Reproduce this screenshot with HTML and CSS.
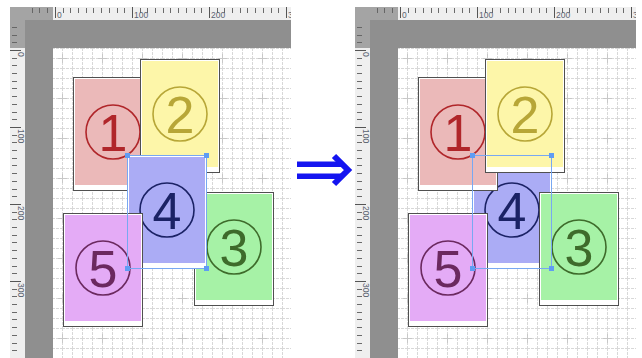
FILE: index.html
```html
<!DOCTYPE html>
<html>
<head>
<meta charset="utf-8">
<link rel="stylesheet" href="styles.css">
</head>
<body>
<div class="stage">
  <div class="panel">
    <div class="corner"></div>
    <div class="hneg"></div>
    <div class="hr"><span>0</span><span>100</span><span>200</span><span>300</span></div>
    <div class="vneg"></div>
    <div class="dark dtop"></div>
    <div class="dark dtop2"></div>
    <div class="vr"><span><b>0</b></span><span><b>100</b></span><span><b>200</b></span><span><b>300</b></span></div>
    <div class="dark dleft"></div>
    <div class="paper">
      <svg class="gridbg" width="238" height="310"><defs><pattern id="g1" x="4" y="5" width="10" height="10" patternUnits="userSpaceOnUse"><path d="M0 5.5h2M3 5.5h5M9 5.5h1M5.5 0v2M5.5 3v5M5.5 9v1" stroke="#d8d8d8" stroke-width="1"/></pattern><pattern id="m1" x="4" y="5" width="40" height="40" patternUnits="userSpaceOnUse"><path d="M1 5.5h9M5.5 1v9" stroke="#c8c8c8" stroke-width="1"/></pattern></defs><rect width="238" height="310" fill="url(#g1)"/><rect width="238" height="310" fill="url(#m1)"/></svg>
      <div class="card p1 k1"><div class="fill"><svg viewBox="0 0 56 56" class="num"><circle cx="28" cy="28" r="27"/><text x="28" y="47">1</text></svg></div></div>
      <div class="card p2 k2"><div class="fill"><svg viewBox="0 0 56 56" class="num"><circle cx="28" cy="28" r="27"/><text x="28" y="47">2</text></svg></div></div>
      <div class="card p3 k3"><div class="fill"><svg viewBox="0 0 56 56" class="num"><circle cx="28" cy="28" r="27"/><text x="28" y="47">3</text></svg></div></div>
      <div class="card p4 k4 sel"><div class="fill"><svg viewBox="0 0 56 56" class="num"><circle cx="28" cy="28" r="27"/><text x="28" y="47">4</text></svg></div></div>
      <div class="card p5 k5"><div class="fill"><svg viewBox="0 0 56 56" class="num"><circle cx="28" cy="28" r="27"/><text x="28" y="47">5</text></svg></div></div>
      <div class="selbox"><i class="h tl"></i><i class="h tr"></i><i class="h bl"></i><i class="h br"></i></div>
    </div>
  </div>

  <div class="arrowcol">
    <svg class="arrow" width="56" height="35" viewBox="0 0 56 35">
      <rect x="0" y="8.5" width="46" height="5.5" fill="#1414f0"/>
      <rect x="0" y="20.5" width="46" height="5.5" fill="#1414f0"/>
      <polyline points="37,3 51,17 37,31" fill="none" stroke="#1414f0" stroke-width="6"/>
    </svg>
  </div>

  <div class="panel">
    <div class="corner"></div>
    <div class="hneg"></div>
    <div class="hr"><span>0</span><span>100</span><span>200</span><span>300</span></div>
    <div class="vneg"></div>
    <div class="dark dtop"></div>
    <div class="dark dtop2"></div>
    <div class="vr"><span><b>0</b></span><span><b>100</b></span><span><b>200</b></span><span><b>300</b></span></div>
    <div class="dark dleft"></div>
    <div class="paper">
      <svg class="gridbg" width="238" height="310"><defs><pattern id="g2" x="4" y="5" width="10" height="10" patternUnits="userSpaceOnUse"><path d="M0 5.5h2M3 5.5h5M9 5.5h1M5.5 0v2M5.5 3v5M5.5 9v1" stroke="#d8d8d8" stroke-width="1"/></pattern><pattern id="m2" x="4" y="5" width="40" height="40" patternUnits="userSpaceOnUse"><path d="M1 5.5h9M5.5 1v9" stroke="#c8c8c8" stroke-width="1"/></pattern></defs><rect width="238" height="310" fill="url(#g2)"/><rect width="238" height="310" fill="url(#m2)"/></svg>
      <div class="card p4 k4 sel"><div class="fill"><svg viewBox="0 0 56 56" class="num"><circle cx="28" cy="28" r="27"/><text x="28" y="47">4</text></svg></div></div>
      <div class="card p1 k1"><div class="fill"><svg viewBox="0 0 56 56" class="num"><circle cx="28" cy="28" r="27"/><text x="28" y="47">1</text></svg></div></div>
      <div class="card p2 k2"><div class="fill"><svg viewBox="0 0 56 56" class="num"><circle cx="28" cy="28" r="27"/><text x="28" y="47">2</text></svg></div></div>
      <div class="card p3 k3"><div class="fill"><svg viewBox="0 0 56 56" class="num"><circle cx="28" cy="28" r="27"/><text x="28" y="47">3</text></svg></div></div>
      <div class="card p5 k5"><div class="fill"><svg viewBox="0 0 56 56" class="num"><circle cx="28" cy="28" r="27"/><text x="28" y="47">5</text></svg></div></div>
      <div class="selbox"><i class="h tl"></i><i class="h tr"></i><i class="h bl"></i><i class="h br"></i></div>
    </div>
  </div>
</div>
</body>
</html>
```
FILE: styles.css
```css
html, body {
  margin: 0;
  padding: 0;
  background: #ffffff;
}
.stage {
  display: flex;
  align-items: flex-start;
  padding: 7px 0 0 10px;
  height: 351px;
  overflow: hidden;
}
.panel {
  width: 281px;
  height: 351px;
  overflow: hidden;
  display: grid;
  grid-template-columns: 15px 28px 238px;
  grid-template-rows: 13px 28px 310px;
  flex: 0 0 auto;
}
.corner {
  background: #a4a4a4;
}
.hneg {
  background-color: #a4a4a4;
  background-image: linear-gradient(#666, #666);
  background-size: 1px 5px;
  background-repeat: no-repeat;
  background-position: 7px 1px;
  position: relative;
}
.hneg::before, .hneg::after {
  content: "";
  position: absolute;
  top: 1px;
  width: 1px;
  height: 5px;
  background: #666;
}
.hneg::before { left: 14px; }
.hneg::after { left: 22px; }
.vneg {
  background: #a4a4a4;
  position: relative;
}
.vneg::before {
  content: "";
  position: absolute;
  left: 2px;
  top: 7px;
  width: 5px;
  height: 1px;
  background: #666;
  box-shadow: 0 8px 0 #666, 0 15px 0 #666;
}
.dark {
  background: #8f8f8f;
}
.hr {
  display: flex;
  padding-left: 2px;
  background-color: #efefef;
  background-image: repeating-linear-gradient(to right, #6a6a6a 0 1px, transparent 1px 7.7px);
  background-size: 100% 5px;
  background-repeat: no-repeat;
  background-position: 2px 1px;
  overflow: hidden;
}
.hr span {
  flex: 0 0 77px;
  box-sizing: border-box;
  height: 13px;
  display: flex;
  align-items: flex-end;
  padding: 0 0 1px 2px;
  background: linear-gradient(#555, #555) no-repeat 0 0 / 1px 11px;
  font-family: "Liberation Sans", Arial, sans-serif;
  font-size: 8.5px;
  line-height: 8px;
  color: #5a6270;
}
.vr {
  display: flex;
  flex-direction: column;
  padding-top: 2px;
  background-color: #efefef;
  background-image: repeating-linear-gradient(to bottom, #6a6a6a 0 1px, transparent 1px 7.7px);
  background-size: 5px 100%;
  background-repeat: no-repeat;
  background-position: 2px 2px;
  overflow: hidden;
}
.vr span {
  flex: 0 0 77px;
  box-sizing: border-box;
  display: flex;
  justify-content: flex-end;
  background: linear-gradient(#555, #555) no-repeat 0 0 / 11px 1px;
}
.vr b {
  font-weight: normal;
  writing-mode: vertical-rl;
  font-family: "Liberation Sans", Arial, sans-serif;
  font-size: 8.5px;
  line-height: 8px;
  padding-top: 2px;
  color: #5a6270;
}
.paper {
  position: relative;
  background: #ffffff;
  overflow: hidden;
}
.gridbg {
  position: absolute;
  left: 0;
  top: 0;
}
.card {
  position: absolute;
  width: 80px;
  height: 114px;
  box-sizing: border-box;
  border: 1px solid #505050;
  padding: 1px 1px 5px 1px;
  background: #ffffff;
  display: flex;
}
.card.sel {
  border-color: #9cc2f6;
}
.fill {
  flex: 1;
  display: flex;
  align-items: center;
  justify-content: center;
}
.num {
  width: 56px;
  height: 56px;
  overflow: visible;
}
.num circle {
  fill: none;
  stroke-width: 1.6;
}
.num text {
  font-family: "Liberation Sans", Arial, sans-serif;
  font-size: 52px;
  text-anchor: middle;
}
.p1 { left: 20px; top: 29px; }
.p2 { left: 87px; top: 11px; }
.p3 { left: 141px; top: 144px; }
.p4 { left: 74px; top: 107px; }
.p5 { left: 10px; top: 165px; }

.k1 .fill { background: #ebb9b9; }
.k1 .num circle { stroke: #b0262a; }
.k1 .num text { fill: #b0262a; }
.k2 .fill { background: #fdf6a9; }
.k2 .num circle { stroke: #b7a637; }
.k2 .num text { fill: #b7a637; }
.k3 .fill { background: #a6f2a6; }
.k3 .num circle { stroke: #3e6b2b; }
.k3 .num text { fill: #3e6b2b; }
.k4 .fill { background: #abacf5; }
.k4 .num circle { stroke: #1b2265; }
.k4 .num text { fill: #1b2265; }
.k5 .fill { background: #e4abf6; }
.k5 .num circle { stroke: #6b295f; }
.k5 .num text { fill: #6b295f; }

.selbox {
  position: absolute;
  left: 74px;
  top: 107px;
  width: 80px;
  height: 114px;
  box-sizing: border-box;
  border: 1px solid #78a8f2;
}
.h {
  position: absolute;
  width: 5px;
  height: 5px;
  background: #5f9cf3;
}
.tl { left: -3px; top: -3px; }
.tr { right: -3px; top: -3px; }
.bl { left: -3px; bottom: -3px; }
.br { right: -3px; bottom: -3px; }

.arrowcol {
  flex: 0 0 64px;
  padding: 146px 0 0 6px;
  box-sizing: border-box;
}
.arrow {
  display: block;
}
```
